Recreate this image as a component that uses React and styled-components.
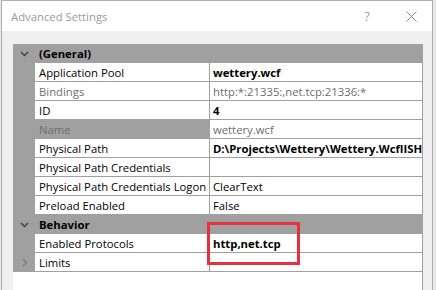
import styled, { createGlobalStyle } from "styled-components";

const GlobalStyle = createGlobalStyle`
  html, body {
    margin: 0;
    padding: 0;
  }
  body {
    font-family: "Open Sans", "Noto Sans", sans-serif;
  }
`;

const Screen = styled.div`
  width: 436px;
  height: 290px;
  overflow: hidden;
  background: #e9e9e9;
  padding-left: 1px;
  box-sizing: border-box;
`;

const Window = styled.div`
  width: 432px;
  height: 300px;
  border: 1px solid #aeaeae;
  border-bottom: none;
  background: #f0f0f0;
  display: flex;
  flex-direction: column;
  box-sizing: border-box;
`;

const TitleBar = styled.div`
  height: 30px;
  background: #ffffff;
  display: flex;
  align-items: center;
  padding-left: 9px;
  flex-shrink: 0;
`;

const Title = styled.div`
  flex: 1;
  font-size: 11.3px;
  color: #9a9a9a;
`;

const TitleButton = styled.div`
  width: ${(p) => p.$w || 46}px;
  height: 30px;
  display: flex;
  align-items: center;
  justify-content: center;
  color: #9a9a9a;
  font-size: 12px;
`;

const Body = styled.div`
  flex: 1;
  padding: 13px 9px 0 11px;
`;

const Grid = styled.div`
  position: relative;
  width: 410px;
  height: 260px;
  background: #ffffff;
  border-right: 1px solid #a0a0a0;
  box-sizing: border-box;
  font-size: 11.3px;
`;

const Row = styled.div`
  display: grid;
  grid-template-columns: 22px 174px 1fr;
  height: 19px;
  background: ${(p) => (p.$category ? "#a0a0a0" : "transparent")};
`;

const Margin = styled.div`
  background: #a0a0a0;
  display: flex;
  align-items: center;
  justify-content: center;
  color: ${(p) => (p.$dim ? "#7a7a7a" : "#3a3a3a")};
`;

const Label = styled.div`
  padding-left: 4px;
  display: flex;
  align-items: center;
  white-space: nowrap;
  overflow: hidden;
  box-sizing: border-box;
  border-bottom: ${(p) => (p.$category ? "none" : "1px solid #a0a0a0")};
  background: ${(p) => (p.$selected ? "#a0a0a0" : "transparent")};
  color: ${(p) => (p.$muted ? "#6d6d6d" : "#000000")};
  font-weight: ${(p) => (p.$category ? 700 : 400)};
`;

const Value = styled.div`
  padding-left: 3px;
  display: flex;
  align-items: center;
  white-space: nowrap;
  overflow: hidden;
  box-sizing: border-box;
  border-left: ${(p) => (p.$category ? "none" : "1px solid #a0a0a0")};
  border-bottom: ${(p) => (p.$category ? "none" : "1px solid #a0a0a0")};
  color: ${(p) => (p.$muted ? "#6d6d6d" : "#000000")};
  font-weight: ${(p) => (p.$bold ? 700 : 400)};
`;

const Highlight = styled.div`
  position: absolute;
  left: 194px;
  top: 178px;
  width: 93px;
  height: 43px;
  border: 3px solid #e5323f;
  box-sizing: border-box;
`;

const Chevron = ({ open }) => (
  <svg width="9" height="9" viewBox="0 0 9 9">
    {open ? (
      <path d="M1 3 L4.5 6.5 L8 3" fill="none" stroke="currentColor" strokeWidth="1.3" />
    ) : (
      <path d="M3 1 L6.5 4.5 L3 8" fill="none" stroke="currentColor" strokeWidth="1.3" />
    )}
  </svg>
);

const rows = [
  { category: true, label: "(General)" },
  { label: "Application Pool", value: "wettery.wcf", bold: true },
  { label: "Bindings", value: "http:*:21335:,net.tcp:21336:*", muted: true },
  { label: "ID", value: "4", bold: true },
  { label: "Name", value: "wettery.wcf", muted: true, selected: true },
  { label: "Physical Path", value: "D:\\Projects\\Wettery\\Wettery.WcfIISHost", bold: true },
  { label: "Physical Path Credentials", value: "" },
  { label: "Physical Path Credentials Logon", value: "ClearText" },
  { label: "Preload Enabled", value: "False" },
  { category: true, label: "Behavior" },
  { label: "Enabled Protocols", value: "http,net.tcp", bold: true },
  { label: "Limits", value: "", collapsed: true },
];

export default function App() {
  return (
    <Screen>
      <GlobalStyle />
      <Window>
        <TitleBar>
          <Title>Advanced Settings</Title>
          <TitleButton>?</TitleButton>
          <TitleButton $w={42}>
            <svg width="11" height="11" viewBox="0 0 11 11">
              <path d="M0.5 0.5 L10.5 10.5 M10.5 0.5 L0.5 10.5" stroke="#8a8a8a" strokeWidth="1" />
            </svg>
          </TitleButton>
        </TitleBar>
        <Body>
          <Grid>
            {rows.map((r) => (
              <Row key={r.label} $category={r.category}>
                <Margin $dim={r.collapsed}>
                  {r.category && <Chevron open />}
                  {r.collapsed && <Chevron />}
                </Margin>
                <Label
                  $category={r.category}
                  $muted={r.muted}
                  $selected={r.selected}
                >
                  {r.label}
                </Label>
                <Value $category={r.category} $muted={r.muted} $bold={r.bold}>
                  {r.value}
                </Value>
              </Row>
            ))}
            <Highlight />
          </Grid>
        </Body>
      </Window>
    </Screen>
  );
}
